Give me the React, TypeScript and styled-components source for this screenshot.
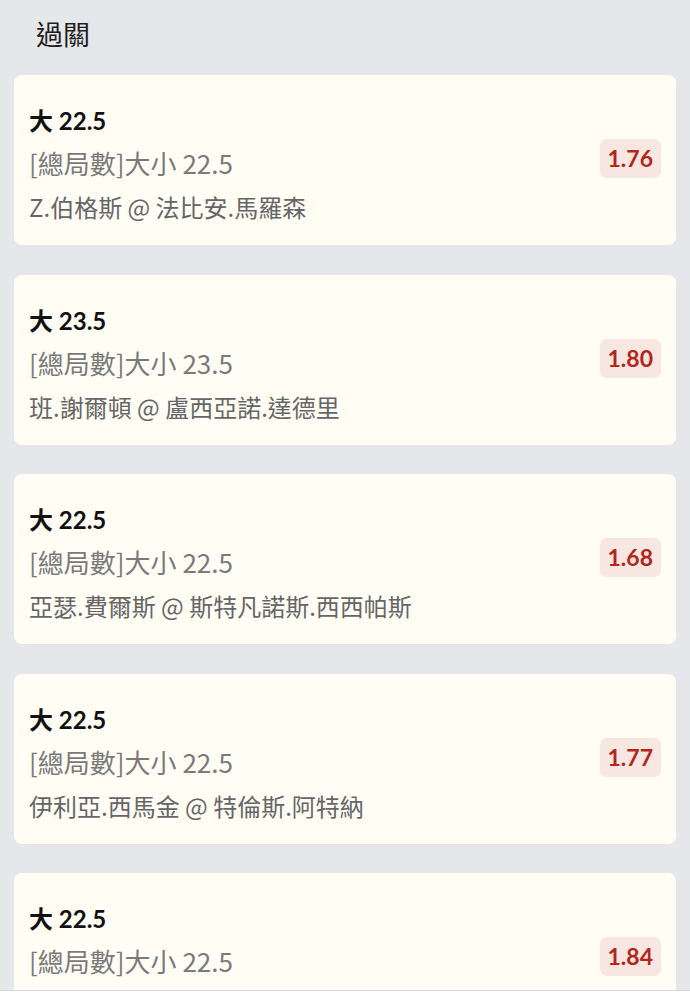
import React from 'react';
import styled, { createGlobalStyle } from 'styled-components';

const GlobalStyle = createGlobalStyle`
  html, body {
    margin: 0;
    padding: 0;
    background: #e6e7ea;
    font-family: Lato, "Noto Sans CJK TC", sans-serif;
  }
`;

const Screen = styled.div`
  width: 690px;
  height: 1000px;
  display: flex;
  flex-direction: column;
  background: #e6e7ea;
  overflow: hidden;
`;

const Scroller = styled.div`
  height: 990px;
  overflow: hidden;
  flex-shrink: 0;
`;

const Header = styled.div`
  height: 68px;
  line-height: 68px;
  padding-left: 36px;
  font-size: 27px;
  color: #1e1e1e;
  font-family: "Noto Sans CJK TC", sans-serif;
`;

const List = styled.div`
  display: flex;
  flex-direction: column;
  gap: 29.5px;
  padding: 7px 14px 0;
`;

const Card = styled.div`
  display: flex;
  align-items: center;
  justify-content: space-between;
  height: 170px;
  box-sizing: border-box;
  padding: 20px 15px 14px;
  background: #fffdf4;
  border-radius: 8px;
  flex-shrink: 0;
`;

const Info = styled.div`
  display: flex;
  flex-direction: column;
  padding-top: 5px;
  align-self: flex-start;
`;

const Title = styled.div`
  font-size: 24px;
  line-height: 41px;
  font-weight: 700;
  color: #111;
  white-space: nowrap;
`;

const Detail = styled.div<{ $market?: boolean }>`
  font-family: "Noto Sans CJK TC", sans-serif;
  font-size: ${({ $market }) => ($market ? '26px' : '24px')};
  line-height: 44px;
  white-space: nowrap;
  color: ${({ $market }) => ($market ? '#7a7a7a' : '#666')};
`;

const Odds = styled.div`
  margin-bottom: 9px;
  padding: 0 8px;
  height: 39px;
  line-height: 39px;
  border-radius: 7px;
  background: #f8e6e0;
  color: #b3261f;
  font-size: 23px;
  font-weight: 700;
`;

const Footer = styled.div`
  flex: 1;
  background: #fff;
  border-top: 1px solid #d9d9dc;
`;

const bets = [
  { pick: '大 22.5', market: '[總局數]大小 22.5', match: 'Z.伯格斯 @ 法比安.馬羅森', odds: '1.76' },
  { pick: '大 23.5', market: '[總局數]大小 23.5', match: '班.謝爾頓 @ 盧西亞諾.達德里', odds: '1.80' },
  { pick: '大 22.5', market: '[總局數]大小 22.5', match: '亞瑟.費爾斯 @ 斯特凡諾斯.西西帕斯', odds: '1.68' },
  { pick: '大 22.5', market: '[總局數]大小 22.5', match: '伊利亞.西馬金 @ 特倫斯.阿特納', odds: '1.77' },
  { pick: '大 22.5', market: '[總局數]大小 22.5', match: '卡倫.哈恰諾夫 @ 亞歷山大.布布里克', odds: '1.84' },
];

export default function App() {
  return (
    <Screen>
      <GlobalStyle />
      <Scroller>
        <Header>過關</Header>
        <List>
          {bets.map((bet, i) => (
            <Card key={i}>
              <Info>
                <Title>{bet.pick}</Title>
                <Detail $market>{bet.market}</Detail>
                <Detail>{bet.match}</Detail>
              </Info>
              <Odds>{bet.odds}</Odds>
            </Card>
          ))}
        </List>
      </Scroller>
      <Footer />
    </Screen>
  );
}
